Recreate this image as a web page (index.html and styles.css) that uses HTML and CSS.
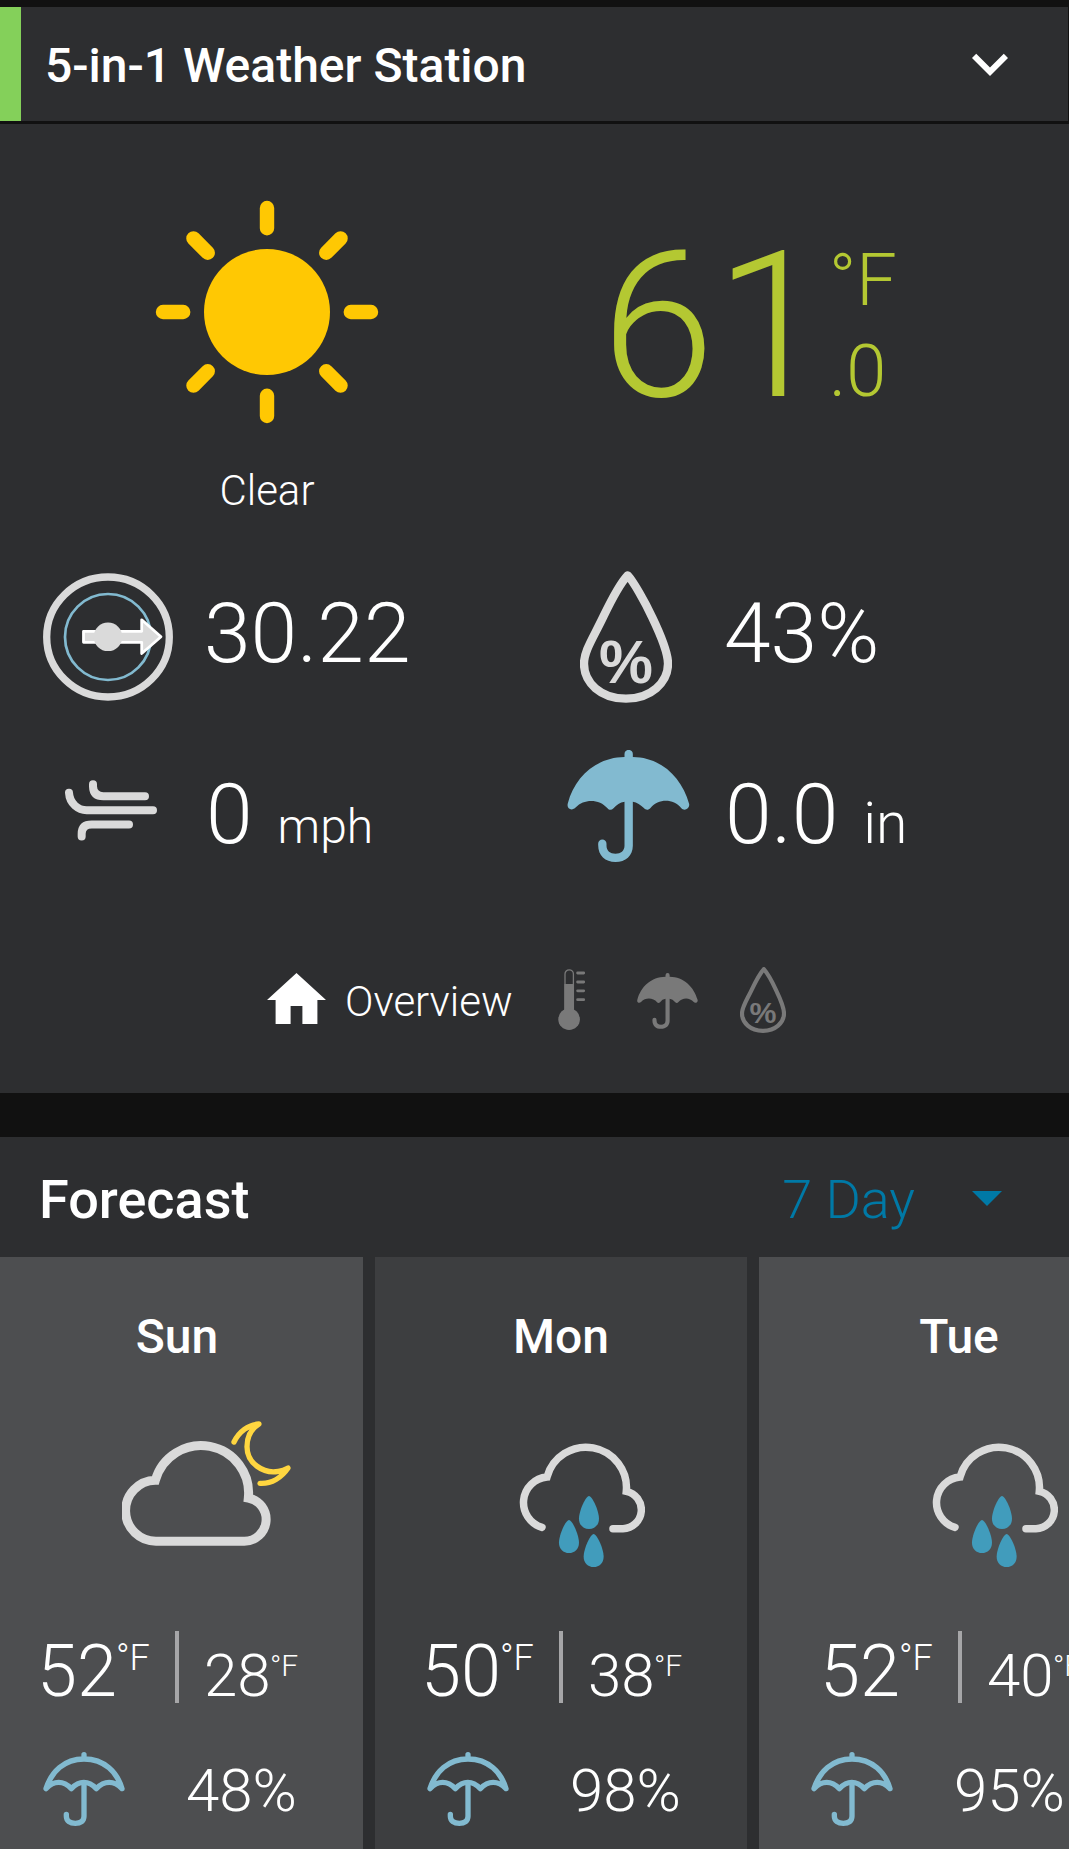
FILE: index.html
```html
<!DOCTYPE html>
<html lang="en">
<head>
<meta charset="utf-8">
<title>5-in-1 Weather Station</title>
<link rel="stylesheet" href="styles.css">
</head>
<body>
<svg class="symbols" aria-hidden="true">
  <symbol id="umbrella" viewBox="0 0 368 336">
    <path fill="currentColor" d="M2 160C22 82 86 22 172 21V12a12.5 12.5 0 0 1 25 0V21C282 22 344 82 366 162C368 178 350 184 342 174C318 145 274 145 250 174C244 181 236 181 231 175Q215 158 197 155V287C197 317 175 336 145 336C114 336 93 317 93 285V281a12.5 12.5 0 0 1 25 0V287C118 302 129 311 145 311C161 311 172 302 172 287V155Q152 158 139 175C133 181 126 181 121 175C97 146 50 146 26 172C15 184-3 178 2 160Z"/>
  </symbol>
  <symbol id="drop" viewBox="0 0 276 396">
    <path fill="none" stroke="currentColor" stroke-width="25" stroke-linejoin="round" d="M143 13C125 32 95 85 70 137C40 200 12 240 12 278C12 335 62 383 138 383C212 383 264 335 264 278C264 250 240 188 217 140C193 88 160 32 143 13Z"/>
    <text class="drop-percent" x="138" y="335" text-anchor="middle" fill="currentColor">%</text>
  </symbol>
  <symbol id="umbrella-line" viewBox="0 0 244 222">
    <g fill="none" stroke="currentColor" stroke-width="16" stroke-linecap="round" stroke-linejoin="round">
      <path d="M122 8V21M8 110C24 60 62 21 122 21C184 21 222 62 236 110C212 85 183 85 159 110C135 85 108 85 84 110C60 85 32 85 8 110Z"/>
      <path d="M122 94V193C122 207 112 214 96 214C80 214 69 207 69 193V187"/>
    </g>
  </symbol>
  <symbol id="rain" viewBox="356 189 379 373">
    <path fill="none" stroke="#dadada" stroke-width="22.5" stroke-linecap="round" d="M425 442A77.200 77.200 0 0 1 440 291A121.400 121.400 0 0 1 678 334A56.600 56.600 0 0 1 668 446H638"/>
    <g fill="#419cbc">
      <path d="M566 348c10 0 30 45 30 68c0 19-13 31-30 31s-30-12-30-31c0-23 20-68 30-68z"/>
      <path d="M506 420c10 0 30 45 30 68c0 19-13 31-30 31s-30-12-30-31c0-23 20-68 30-68z"/>
      <path d="M580 462c10 0 30 45 30 68c0 19-13 31-30 31s-30-12-30-31c0-23 20-68 30-68z"/>
    </g>
  </symbol>
</svg>

<header class="station">
  <h1 class="station-name">5-in-1 Weather Station</h1>
  <svg class="chevron" viewBox="0 0 24 24"><path fill="#fff" d="M16.59 8.59L12 13.17 7.41 8.59 6 10l6 6 6-6z"/></svg>
</header>

<main class="current">
  <section class="hero">
    <div class="condition">
      <svg class="sun" viewBox="-112 -112 224 224">
        <circle r="63" fill="#ffc803"/>
        <g stroke="#ffc803" stroke-width="14.4" stroke-linecap="round">
          <path id="ray" d="M0-104V-83.8M0 104V83.8M-104 0H-83.8M104 0H83.8"/>
          <use href="#ray" transform="rotate(45)"/>
        </g>
      </svg>
      <p class="condition-name">Clear</p>
    </div>
    <div class="temperature">
      <span class="temperature-whole">61</span>
      <div class="temperature-side"><span>°F</span><span>.0</span></div>
    </div>
  </section>

  <section class="readings">
    <div class="reading">
      <svg class="reading-icon compass" viewBox="0 0 130 128">
        <ellipse cx="65" cy="64" rx="61.3" ry="60" fill="none" stroke="#dadada" stroke-width="7.3"/>
        <circle cx="65" cy="64" r="43" fill="none" stroke="#82bad0" stroke-width="2.7"/>
        <path fill="#dadada" stroke="#fff" stroke-width="2.8" stroke-linejoin="round" d="M40.5 58.3H98.700V46.800L118 63.700L98.700 80.500V69.300H40.500Z"/>
        <circle cx="65" cy="63.800" r="14.300" fill="#dadada"/>
      </svg>
      <span class="value">30.22</span>
    </div>
    <div class="reading reading-right">
      <svg class="reading-icon humidity"><use href="#drop"/></svg>
      <span class="value">43%</span>
    </div>
    <div class="reading">
      <svg class="reading-icon wind" viewBox="135 689 276 182">
        <path fill="none" stroke="#dadada" stroke-width="24" stroke-linecap="round" d="M219 701V708Q220 737 250 737H375M147 727C149 760 175 779 200 779H399M185 858V850Q185 822 215 822H327"/>
      </svg>
      <span class="value">0</span><span class="unit">mph</span>
    </div>
    <div class="reading reading-right">
      <svg class="reading-icon rainfall"><use href="#umbrella"/></svg>
      <span class="value">0.0</span><span class="unit unit-large">in</span>
    </div>
  </section>

  <nav class="tabs">
    <svg class="tab-home" viewBox="0 0 59 51"><path fill="#fff" d="M29.500 0L59 27H50.400V51H35.400V33H23.600V51H8.600V27H0Z"/></svg>
    <span class="tab-label">Overview</span>
    <svg class="tab-thermo" viewBox="0 0 28 61">
      <path fill="none" stroke="currentColor" stroke-width="1.300" d="M7 45V5a4.200 4.200 0 0 1 8.400 0V45"/>
      <path fill="currentColor" d="M6.400 15H16V46H6.400Z"/>
      <circle cx="11.100" cy="50.200" r="10.800" fill="currentColor"/>
      <path stroke="currentColor" stroke-width="2.800" stroke-linecap="round" d="M19.600 4H25.700M19.600 13H25.700M19.600 21.800H25.700M19.600 30.700H25.700"/>
    </svg>
    <svg class="tab-rain"><use href="#umbrella"/></svg>
    <svg class="tab-humidity"><use href="#drop"/></svg>
  </nav>
</main>

<section class="forecast">
  <header class="forecast-head">
    <h2 class="forecast-title">Forecast</h2>
    <span class="range">7 Day</span>
    <svg class="caret" viewBox="0 0 30 15"><path fill="#0079a6" d="M0 0H30L15 15Z"/></svg>
  </header>
  <div class="days">
    <article class="day">
      <h3 class="day-name">Sun</h3>
      <div class="sky">
        <svg class="sky-cloud" viewBox="366 123 507 375">
          <path fill="none" stroke="#dadada" stroke-width="27" d="M466 301A91.100 91.100 0 0 0 470 483.500H733A65.300 65.300 0 0 0 745 354A142.500 142.500 0 0 0 466 301Z"/>
          <path fill="none" stroke="#ffd640" stroke-width="16" stroke-linecap="round" stroke-linejoin="round" d="M702 186C717 155 745 134 777 132C748 150 741 175 741 200C741 250 790 282 835 274Q850 272 864 264C845 292 815 312 780 310"/>
        </svg>
      </div>
      <div class="temps">
        <span class="high">52</span><span class="high-unit">°F</span>
        <span class="divider"></span>
        <span class="low">28</span><span class="low-unit">°F</span>
      </div>
      <div class="precip"><svg class="precip-icon"><use href="#umbrella-line"/></svg><span>48%</span></div>
    </article>
    <article class="day day-alt">
      <h3 class="day-name">Mon</h3>
      <div class="sky"><svg class="sky-rain"><use href="#rain"/></svg></div>
      <div class="temps">
        <span class="high">50</span><span class="high-unit">°F</span>
        <span class="divider"></span>
        <span class="low">38</span><span class="low-unit">°F</span>
      </div>
      <div class="precip"><svg class="precip-icon"><use href="#umbrella-line"/></svg><span>98%</span></div>
    </article>
    <article class="day day-wide">
      <h3 class="day-name">Tue</h3>
      <div class="sky"><svg class="sky-rain"><use href="#rain"/></svg></div>
      <div class="temps">
        <span class="high">52</span><span class="high-unit">°F</span>
        <span class="divider"></span>
        <span class="low">40</span><span class="low-unit">°F</span>
      </div>
      <div class="precip"><svg class="precip-icon"><use href="#umbrella-line"/></svg><span>95%</span></div>
    </article>
  </div>
</section>
</body>
</html>
```
FILE: styles.css
```css
* { box-sizing: border-box; margin: 0; padding: 0; }

body {
  width: 1069px;
  height: 1849px;
  overflow: hidden;
  padding-top: 7px;
  background: #111;
  color: #fff;
  font-family: Roboto, sans-serif;
  font-weight: 300;
}

svg { display: block; flex: none; }
.symbols { width: 0; height: 0; float: left; }
.drop-percent { font: 700 182px "Liberation Sans", sans-serif; }

.station {
  display: flex;
  align-items: center;
  justify-content: space-between;
  height: 114px;
  margin-right: 1px;
  padding: 0 42px 0 24px;
  border-left: 21px solid #84d05a;
  background: #2d2e30;
}
.station-name { padding-top: 4px; font-size: 48px; font-weight: 500; line-height: 56px; }
.chevron { width: 72px; height: 72px; }

.current {
  height: 969px;
  margin-top: 3px;
  background: #2d2e30;
}

.hero {
  display: grid;
  grid-template-columns: 534px 1fr;
  height: 419px;
}
.condition {
  display: flex;
  flex-direction: column;
  align-items: center;
  padding-top: 76px;
}
.sun { width: 224px; height: 224px; }
.condition-name { margin-top: 42px; font-size: 42px; line-height: 50px; }

.temperature {
  display: flex;
  align-items: flex-start;
  padding: 99px 0 0 67px;
  color: #b4c832;
}
.temperature-whole { width: 228px; font-size: 205px; line-height: 206px; }
.temperature-side {
  display: flex;
  flex-direction: column;
  padding-top: 12px;
  font-size: 72px;
  line-height: 91px;
}

.readings {
  display: grid;
  grid-template-columns: 520px 1fr;
  grid-auto-rows: 181px;
}
.reading { display: flex; padding-left: 43px; line-height: 181px; }
.reading-right { padding-left: 47px; }
.reading-icon { color: #dadada; }
.value { font-size: 84px; }
.unit { margin-left: 25px; font-size: 48px; line-height: 206px; }
.unit-large { font-size: 57px; line-height: 200px; }
.compass { width: 130px; height: 128px; margin: 30px 31px 0 0; }
.humidity { width: 92px; height: 132px; margin: 28px 52px 0 13px; }
.wind { width: 92px; height: 61px; margin: 56px 49px 0 22px; }
.rainfall { width: 123px; height: 112px; margin: 26px 35px 0 0; color: #82bad0; }

.tabs {
  display: flex;
  align-items: center;
  height: 92px;
  margin-top: 50px;
  padding-left: 267px;
  color: #797979;
}
.tab-home { width: 59px; height: 51px; margin-bottom: 5px; }
.tab-label { margin-left: 19px; padding-top: 2px; width: 213px; color: #fff; font-size: 42px; line-height: 50px; }
.tab-thermo { width: 28px; height: 61px; margin-bottom: 3px; }
.tab-rain { width: 61px; height: 56px; margin-left: 51px; }
.tab-humidity { width: 46px; height: 66px; margin: 0 0 2px 42px; }

.forecast { margin-top: 44px; background: #2d2e30; overflow: hidden; }
.forecast-head {
  display: flex;
  align-items: center;
  height: 120px;
  padding: 4px 67px 0 39px;
}
.forecast-title { margin-right: auto; font-size: 54px; font-weight: 500; }
.range { color: #0079a6; font-size: 54px; }
.caret { width: 30px; height: 15px; margin: 0 0 2px 57px; }

.days { display: flex; gap: 12px; margin-left: -9px; }
.day {
  flex: 0 0 372px;
  height: 592px;
  padding-top: 52px;
  background: #4d4e50;
}
.day-alt { background: #3d3e40; }
.day-wide { flex-basis: 400px; }
.day-name { font-size: 48px; font-weight: 500; line-height: 56px; text-align: center; }
.sky { height: 266px; padding-top: 78px; }
.sky-cloud { width: 169px; height: 125px; margin: -22px 0 0 131px; }
.sky-rain { width: 126.300px; height: 124.300px; margin-left: 144px; }
.day-wide .sky-rain { margin-left: 173px; }

.temps { display: flex; align-items: flex-start; height: 72px; padding-left: 46px; }
.day-wide .temps { padding-left: 61px; }
.high { width: 79px; font-size: 72px; line-height: 81px; }
.high-unit { width: 59px; font-size: 36px; line-height: 55px; }
.divider { width: 4px; height: 72px; background: #a6a6a8; }
.low { width: 66px; margin-left: 25px; font-size: 60px; line-height: 89px; }
.low-unit { font-size: 30px; line-height: 69px; }

.precip { display: flex; padding: 48px 0 0 52px; font-size: 60px; line-height: 80px; }
.precip-icon { width: 82px; height: 74px; margin: 1px 61px 0 0; color: #82bad0; }
```
